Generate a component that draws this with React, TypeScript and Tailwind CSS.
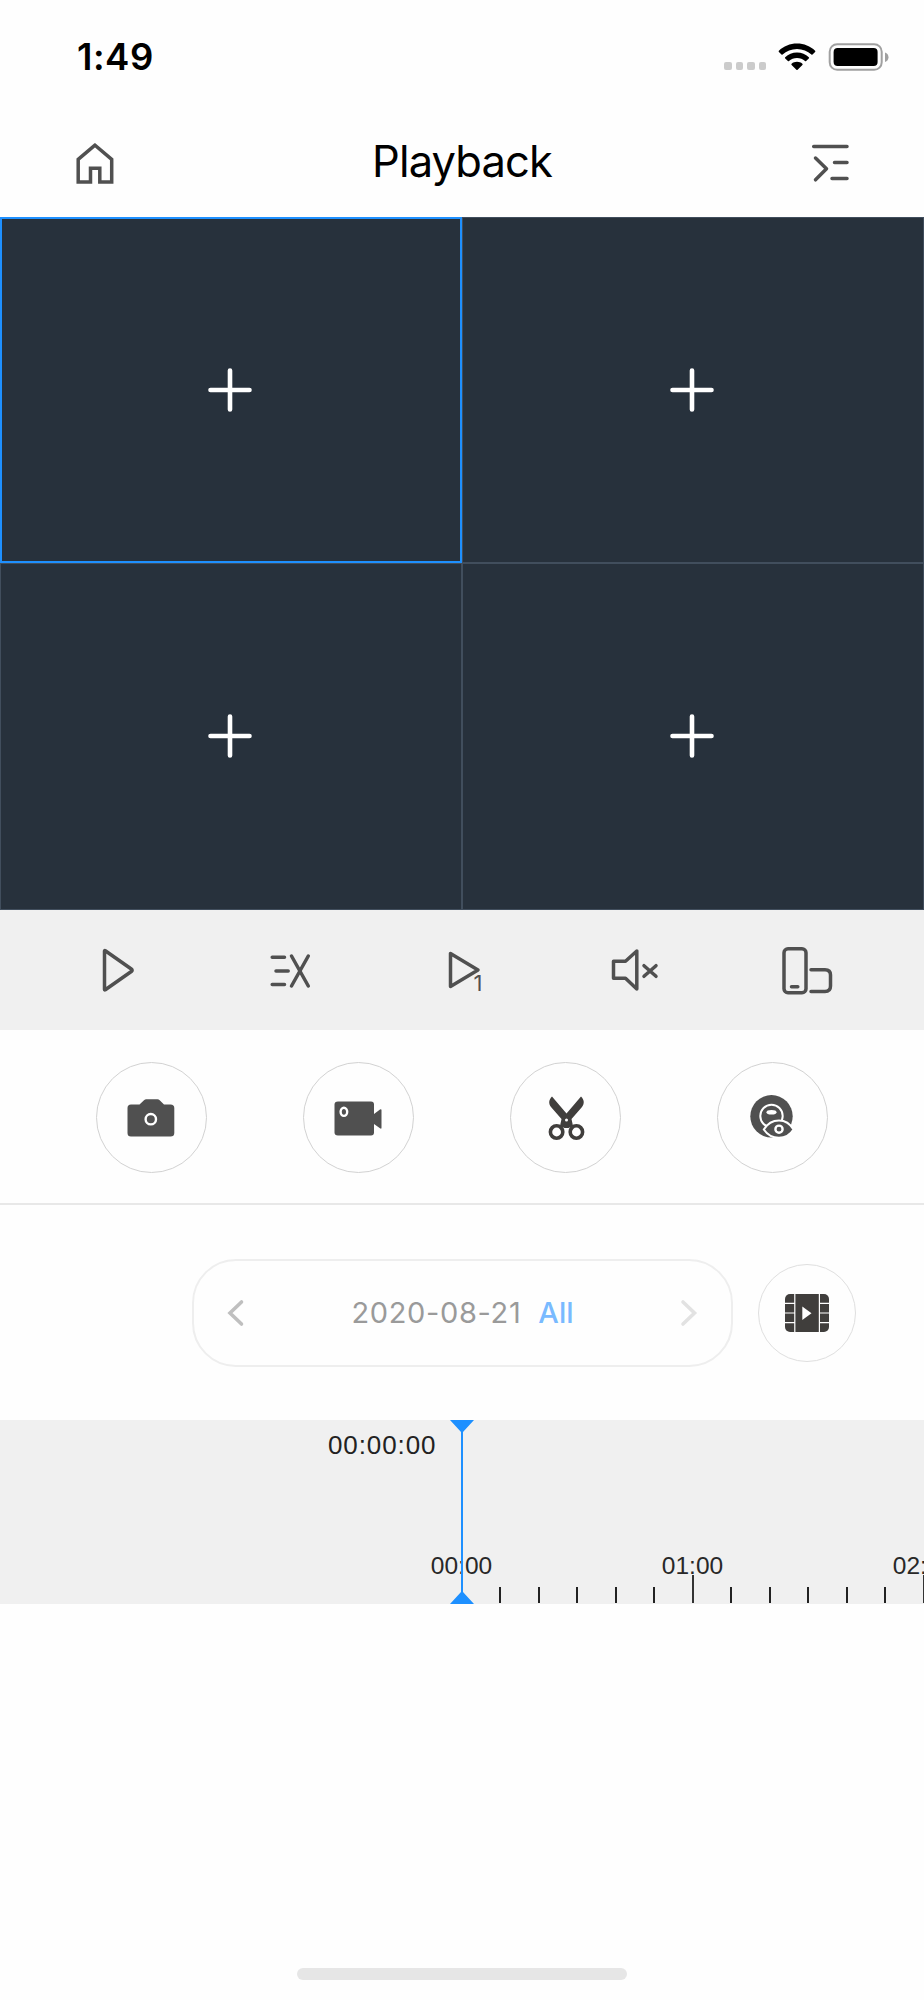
import type { ReactNode } from "react";

function Glyph({ size, children }: { size: number; children: ReactNode }) {
  return (
    <svg
      width={size}
      height={size}
      viewBox={`0 0 ${size} ${size}`}
      fill="none"
      stroke="#505050"
      strokeWidth="3.5"
      strokeLinecap="round"
      strokeLinejoin="round"
      className="block shrink-0"
    >
      {children}
    </svg>
  );
}

function StatusBar() {
  return (
    <div className="flex h-[114px] items-center justify-between pl-[77px] pr-[35px]">
      <div className="text-[36.5px] font-semibold leading-none tracking-[0.5px]">1:49</div>
      <div className="flex items-center">
        <div className="mt-[18px] flex gap-[4px]">
          {[0, 1, 2, 3].map((i) => (
            <div key={i} className="h-[7.5px] w-[7.5px] rounded-[2px] bg-[#cbcbcb]" />
          ))}
        </div>
        <svg width="38" height="28" viewBox="0 0 38 28" className="ml-[12px]" fill="#000">
          <path d="M19 0.6C26 0.6 32.4 3.3 37.1 7.8C37.5 8.2 37.5 8.6 37.1 9L34.5 11.6C34.2 11.9 33.8 11.9 33.4 11.6C29.6 8 24.6 5.9 19 5.9S8.400 8 4.600 11.600C4.200 11.900 3.800 11.900 3.500 11.600L0.900 9C0.500 8.600 0.500 8.200 0.900 7.800C5.600 3.300 12 0.600 19 0.600Z" />
          <path d="M19 9.600C23.600 9.600 27.700 11.300 30.800 14.200C31.200 14.600 31.200 15 30.800 15.400L28.100 18C27.800 18.300 27.400 18.300 27 18C24.900 16.100 22.100 15 19 15S13.100 16.100 11 18C10.600 18.300 10.200 18.300 9.900 18L7.200 15.400C6.800 15 6.800 14.600 7.200 14.200C10.300 11.300 14.400 9.600 19 9.600Z" />
          <path d="M19 18.800C21.100 18.800 22.900 19.500 24.400 20.700C24.800 21.100 24.800 21.500 24.400 21.900L19.600 26.700C19.200 27.100 18.800 27.100 18.400 26.700L13.600 21.900C13.200 21.500 13.200 21.100 13.600 20.700C15.100 19.500 16.900 18.800 19 18.800Z" />
        </svg>
        <svg width="61" height="28" viewBox="0 0 61 28" className="ml-[12px]">
          <rect x="1.700" y="1.200" width="52" height="25.600" rx="7.500" fill="none" stroke="#a0a0a0" strokeWidth="2" />
          <rect x="5.600" y="5" width="44" height="18" rx="4" fill="#000" />
          <path d="M57 9.500C59.300 10.300 60.500 12 60.500 14.200C60.500 16.400 59.300 18.200 57 19Z" fill="#a0a0a0" />
        </svg>
      </div>
    </div>
  );
}

function Header() {
  return (
    <header className="flex h-[103px] items-center justify-between px-[74px] pb-[6px]">
      <div className="w-[42px]">
        <Glyph size={42}>
          <path
            strokeLinejoin="miter"
            strokeLinecap="butt"
            d="M21 3.200L4.200 17.300V40H16.500V26.300H25.800V40H37.700V17.300Z"
          />
        </Glyph>
      </div>
      <h1 className="pb-[2px] text-[43.5px] leading-none tracking-[-0.9px]">Playback</h1>
      <div className="w-[42px] pt-[1px]">
        <Glyph size={42}>
          <path d="M5.700 4.400H39M7.500 16L18.500 26.800L7.500 37.800M26.500 20.400H39M24 36.400H39" />
        </Glyph>
      </div>
    </header>
  );
}

function Tile({ selected }: { selected?: boolean }) {
  return (
    <div
      className={
        selected
          ? "flex items-center justify-center border-2 border-[#1e90ff] bg-[#27313c]"
          : "flex items-center justify-center border border-[#414e5d] bg-[#27313c]"
      }
    >
      <svg width="44" height="44" viewBox="0 0 44 44" className="mb-[1px] mr-[2px]" stroke="#fff" strokeWidth="4.600" strokeLinecap="round">
        <path d="M22 2.500V41.500M2.500 22H41.500" />
      </svg>
    </div>
  );
}

function Controls() {
  return (
    <div className="grid h-[120px] grid-cols-5 place-items-center bg-[#f0f0f0] px-8">
      <Glyph size={60}>
        <path d="M16.500 11V49.500Q16.500 50.300 17.300 49.800L43.300 31.500Q45 30.200 43.300 29L17.300 10.700Q16.500 10.200 16.500 11Z" />
      </Glyph>
      <Glyph size={60}>
        <path d="M12.200 17.200H24.500M16 30.900H28.200M12.200 44.400H24.500M31.500 16L48.300 46M48.300 16L31.500 46" />
      </Glyph>
      <Glyph size={60}>
        <path d="M18.500 13.500V46.500L46 30Z" />
        <text x="41.500" y="50.500" fill="#505050" stroke="none" fontSize="22" fontFamily="Inter, sans-serif" fontWeight="400">
          1
        </text>
      </Glyph>
      <Glyph size={60}>
        <path d="M9.500 21.300H21.500L32.800 11V49L21.500 38.300H9.500ZM40 25.700L52 36.300M52 25.700L40 36.300" />
      </Glyph>
      <Glyph size={60}>
        <rect x="8" y="8.800" width="22" height="44" rx="4" />
        <path d="M15.500 46.800H21.800M35 29.700H49Q54.500 29.700 54.500 35V46Q54.500 51.500 49 51.500H35" />
      </Glyph>
    </div>
  );
}

function RoundButton({ children }: { children: ReactNode }) {
  return (
    <div className="flex h-[111px] w-[111px] items-center justify-center rounded-full border border-[#d2d2d2] pr-[1px]">
      {children}
    </div>
  );
}

function Actions() {
  return (
    <div className="flex h-[175px] gap-24 border-b-2 border-[#e8e8e8] pl-24 pt-[32px]">
      <RoundButton>
        <svg width="48" height="48" viewBox="0 0 48 48" fill="#505050">
          <path d="M4 10.500H12.500L17 6.200Q18 5.300 19.200 5.300H30.500Q31.700 5.300 32.700 6.200L37 10.500H43.500Q47.300 10.500 47.300 14V39Q47.300 42.500 43.500 42.500H4Q0.500 42.500 0.500 39V14Q0.500 10.500 4 10.500Z" />
          <circle cx="23.800" cy="25.200" r="5.200" fill="none" stroke="#fff" strokeWidth="2.400" />
        </svg>
      </RoundButton>
      <RoundButton>
        <svg width="48" height="48" viewBox="0 0 48 48" fill="#505050">
          <path d="M4 7.500H37Q40 7.500 40 10.500V20L46 15.500Q47.500 14.500 47.500 16.200V33.500Q47.500 35.500 46 34.300L40 30V38.500Q40 41.500 37 41.500H4Q0.500 41.500 0.500 38.500V10.500Q0.500 7.500 4 7.500Z" />
          <ellipse cx="9.900" cy="17.800" rx="3.300" ry="4.100" fill="none" stroke="#fff" strokeWidth="2.400" />
        </svg>
      </RoundButton>
      <RoundButton>
        <svg width="48" height="48" viewBox="0 0 48 48" className="ml-[1px]" fill="#403e3c">
          <path d="M10 2.500L24.500 19.500L39 2.500C42.500 6 42.500 9.500 40 13L29.500 25L31 32L26.500 34H22.500L18 32L19.500 25L9 13C6.500 9.500 6.500 6 10 2.500Z" />
          <circle cx="14.600" cy="38" r="6.200" fill="#fff" stroke="#403e3c" strokeWidth="3.600" />
          <circle cx="34.400" cy="38" r="6.200" fill="#fff" stroke="#403e3c" strokeWidth="3.600" />
          <circle cx="24.500" cy="26" r="1.500" fill="#fff" />
        </svg>
      </RoundButton>
      <RoundButton>
        <svg width="48" height="48" viewBox="0 0 48 48" fill="#505050">
          <circle cx="23.500" cy="22.300" r="21.200" />
          <circle cx="23.500" cy="22" r="11.200" fill="none" stroke="#fff" strokeWidth="2" />
          <ellipse cx="23.500" cy="18.200" rx="5" ry="2.300" fill="#fff" />
          <path
            d="M15.800 35.500C19.500 29.500 25 26.500 31 26.500S42 29.500 45.500 35.500C42 41 37 43.800 31 43.800S19.500 41 15.800 35.500Z"
            stroke="#fff"
            strokeWidth="2"
          />
          <circle cx="31" cy="35.200" r="3.600" fill="none" stroke="#fff" strokeWidth="2.400" />
        </svg>
      </RoundButton>
    </div>
  );
}

function DatePicker() {
  return (
    <div className="flex h-[215px] items-center pl-[192px]">
      <div className="flex h-[108px] w-[541px] items-center justify-between rounded-[44px] border-2 border-[#eeeeee] px-[33px]">
        <svg width="18" height="28" viewBox="0 0 18 28" fill="none" stroke="#bfbfbf" strokeWidth="3.600" strokeLinecap="round">
          <path d="M14.500 3L3 14L14.500 25" />
        </svg>
        <div className="flex items-center text-[29px] leading-none">
          <span className="tracking-[0.650px] text-[#9a9a9a]">2020-08-21</span>
          <span className="ml-[17px] font-medium text-[#79baff]">All</span>
        </div>
        <svg width="18" height="28" viewBox="0 0 18 28" fill="none" stroke="#e2e2e2" strokeWidth="3.600" strokeLinecap="round">
          <path d="M3 3L14.500 14L3 25" />
        </svg>
      </div>
      <div className="ml-[25px] flex h-[98px] w-[98px] items-center justify-center rounded-full border border-[#dfdfdf]">
        <svg width="44" height="38" viewBox="0 0 44 38">
          <rect width="44" height="38" rx="5" fill="#403e3c" />
          <path d="M9.800 0V38M34.400 0V38M0 9.300H9.800M0 19H9.800M0 28.700H9.800M34.400 9.300H44M34.400 19H44M34.400 28.700H44" stroke="#fff" strokeWidth="1.200" />
          <path d="M17.300 12.500V26L26.500 19.200Z" fill="#fff" />
        </svg>
      </div>
    </div>
  );
}

const ticks = Array.from({ length: 13 }, (_, i) => i);
const hours = ["00:00", "01:00", "02:00"];

function Timeline() {
  return (
    <div className="relative h-[184px] overflow-hidden bg-[#f0f0f0]">
      <div className="absolute left-[328px] top-[12px] font-['Liberation_Sans',sans-serif] text-[26px] leading-none tracking-[0.900px] text-[#222]">
        00:00:00
      </div>
      {ticks.map((i) => (
        <div
          key={i}
          className={
            i % 6 === 0
              ? "absolute bottom-[1px] h-[28px] w-[2px] bg-[#333]"
              : "absolute bottom-[1px] h-[16px] w-[2px] bg-[#222]"
          }
          style={{ left: 460.900 + i * 38.5 }}
        />
      ))}
      {hours.map((h, i) => (
        <div
          key={h}
          className="absolute top-[134px] w-[80px] text-center font-['Liberation_Sans',sans-serif] text-[24.500px] leading-none text-[#282828]"
          style={{ left: 421.5 + i * 231 }}
        >
          {h}
        </div>
      ))}
      <svg width="24" height="184" viewBox="0 0 24 184" className="absolute left-[450px] top-0" fill="#1e90ff">
        <path d="M0 0H24L13 12V172L24 184H0L11 172V12Z" />
      </svg>
    </div>
  );
}

export default function App() {
  return (
    <div className="flex h-[2000px] w-[924px] flex-col overflow-hidden bg-[#fefefe] font-[Inter,'Liberation_Sans',sans-serif] text-black">
      <StatusBar />
      <Header />
      <div className="grid grid-cols-2 grid-rows-[346px_347px]">
        <Tile selected />
        <Tile />
        <Tile />
        <Tile />
      </div>
      <Controls />
      <Actions />
      <DatePicker />
      <Timeline />
      <div className="mx-auto mb-[20px] mt-auto h-[12px] w-[330px] rounded-full bg-[#e6e6e6]" />
    </div>
  );
}
